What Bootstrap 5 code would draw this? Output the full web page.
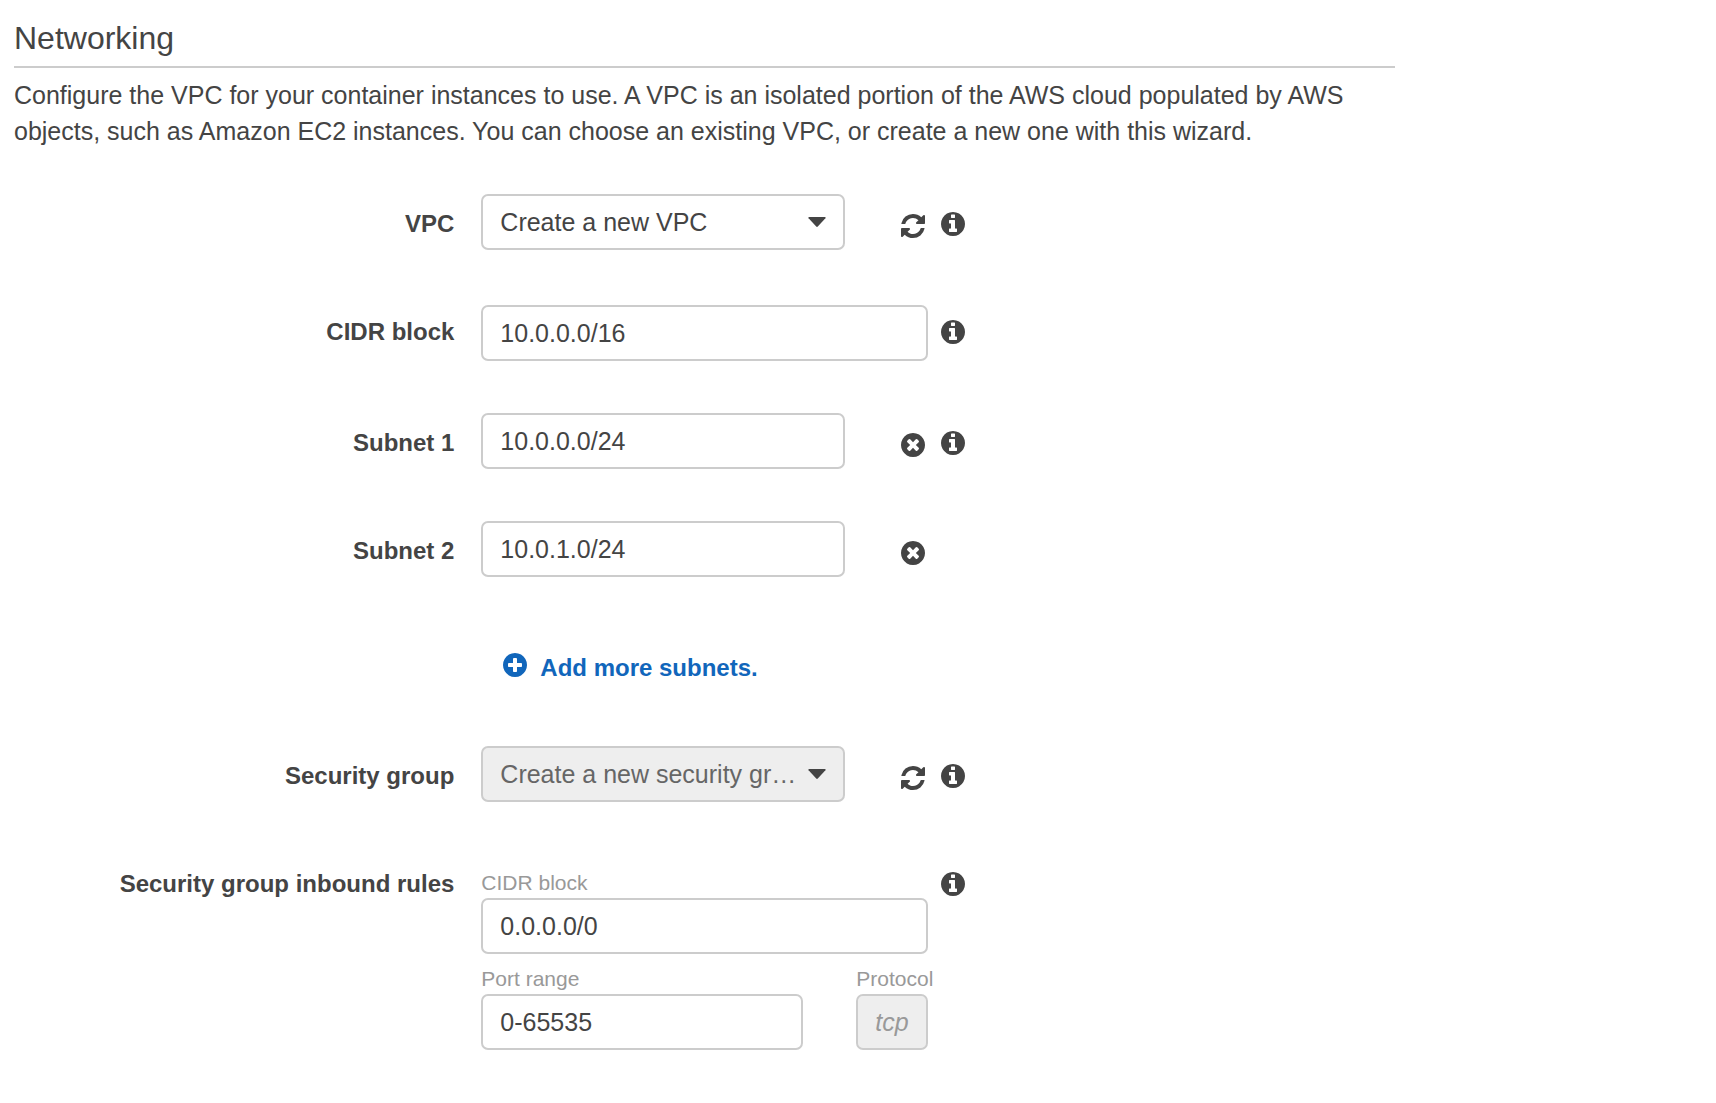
<!DOCTYPE html>
<html lang="en">
<head>
<meta charset="utf-8">
<meta name="viewport" content="width=device-width, initial-scale=1">
<title>Networking</title>
<link href="https://cdn.jsdelivr.net/npm/bootstrap@5.3.0/dist/css/bootstrap.min.css" rel="stylesheet">
<style>
  body { font-family: "Liberation Sans", Arial, sans-serif; font-size: 25px; line-height: 36px; color: #444; background: #fff; }
  .panel { padding: 18px 35px 0 14px; }
  .panel-title { font-size: 32px; line-height: 40px; font-weight: 400; padding-bottom: 8px; border-bottom: 2px solid #ccc; margin-bottom: 9px; }
  .intro { margin-bottom: 45px; }
  .field-row { margin-bottom: 52px; }
  .field-label { padding: 12px 20px 0 0; font-size: 24px; font-weight: 700; text-align: right; }
  .field-body { padding-left: 7px; column-gap: 13px; }
  .slot { flex: 0 1 447px; min-width: 0; }
  .slot-low { padding-top: 3px; }
  .narrow { flex: 0 1 364px; }
  .form-control, .form-select { height: 56px; padding: 8px 17px; border: 2px solid #ccc; border-radius: 7px; font-size: 25px; line-height: 36px; color: #444; background-color: #fff; }
  .form-select { padding-right: 46px; text-overflow: ellipsis; background-size: 18px 10px; background-position: right 17px center;
    background-image: url("data:image/svg+xml,%3Csvg xmlns='http://www.w3.org/2000/svg' viewBox='0 0 18 10'%3E%3Cpath fill='%23444' d='M1 0h16q1 .3.4 1.2L9.8 9.6q-.8.8-1.6 0L.6 1.2Q0 .3 1 0z'/%3E%3C/svg%3E"); }
  .form-select:disabled { color: #666; background-color: #eee; opacity: 1; }
  .form-control:disabled { color: #999; background-color: #eee; font-style: italic; opacity: 1; }
  .icon-btn { display: block; padding: 0; border: 0; background: none; color: #444; line-height: 0; }
  .icon-btn svg, .add-link svg { width: 24px; height: 24px; fill: currentColor; }
  .icon-action { margin: 20px 3px 0 0; }
  .icon-info { margin-top: 18px; }
  .sub-label { display: block; font-size: 21px; line-height: 30px; color: #999; }
  .rules { padding-top: 14px; }
  .ports { padding-top: 10px; }
  .port-field { flex: 0 1 322px; }
  .protocol-field { flex: 0 0 72px; min-width: 0; white-space: nowrap; }
  .add-row { padding: 21px 0 7px; font-size: 24px; }
  .add-link { margin-left: 22px; gap: 13px; font-weight: 700; color: #1166bb; text-decoration: none; }
  .add-link svg { margin-top: 3px; }
</style>
</head>
<body>
<svg class="d-none" aria-hidden="true">
  <symbol id="i-refresh" viewBox="128 128 1536 1536"><path d="M1639 1056q0 5-1 7-64 268-268 434.500t-478 166.500q-146 0-282.500-55t-243.500-157l-129 129q-19 19-45 19t-45-19-19-45v-448q0-26 19-45t45-19h448q26 0 45 19t19 45-19 45l-137 137q71 66 161 102t187 36q134 0 250-65t186-179q11-17 53-117 8-23 30-23h192q13 0 22.500 9.500t9.500 22.500zm25-800v448q0 26-19 45t-45 19h-448q-26 0-45-19t-19-45 19-45l138-138q-148-137-349-137-134 0-250 65t-186 179q-11 17-53 117-8 23-30 23h-199q-13 0-22.500-9.500t-9.500-22.500v-7q65-268 270-434.500t480-166.500q146 0 284 55.500t245 156.500l130-129q19-19 45-19t45 19 19 45z"/></symbol>
  <symbol id="i-info" viewBox="128 128 1536 1536"><path d="M1152 1376v-160q0-14-9-23t-23-9h-96v-512q0-14-9-23t-23-9h-320q-14 0-23 9t-9 23v160q0 14 9 23t23 9h96v320h-96q-14 0-23 9t-9 23v160q0 14 9 23t23 9h448q14 0 23-9t9-23zm-128-896v-160q0-14-9-23t-23-9h-192q-14 0-23 9t-9 23v160q0 14 9 23t23 9h192q14 0 23-9t9-23zm640 416q0 209-103 385.500t-279.500 279.500-385.500 103-385.500-103-279.500-279.500-103-385.500 103-385.500 279.500-279.500 385.500-103 385.500 103 279.500 279.500 103 385.500z"/></symbol>
  <symbol id="i-times" viewBox="128 128 1536 1536"><path d="M1277 1122q0-26-19-45l-181-181 181-181q19-19 19-45 0-27-19-46l-90-90q-19-19-46-19-26 0-45 19l-181 181-181-181q-19-19-45-19-27 0-46 19l-90 90q-19 19-19 46 0 26 19 45l181 181-181 181q-19 19-19 45 0 27 19 46l90 90q19 19 46 19 26 0 45-19l181-181 181 181q19 19 45 19 27 0 46-19l90-90q19-19 19-46zm387-226q0 209-103 385.500t-279.500 279.500-385.500 103-385.500-103-279.500-279.500-103-385.500 103-385.500 279.500-279.500 385.500-103 385.500 103 279.500 279.500 103 385.500z"/></symbol>
  <symbol id="i-plus" viewBox="128 128 1536 1536"><path d="M1344 960v-128q0-26-19-45t-45-19h-256v-256q0-26-19-45t-45-19h-128q-26 0-45 19t-19 45v256h-256q-26 0-45 19t-19 45v128q0 26 19 45t45 19h256v256q0 26 19 45t45 19h128q26 0 45-19t19-45v-256h256q26 0 45-19t19-45zm320-64q0 209-103 385.500t-279.500 279.500-385.500 103-385.500-103-279.500-279.500-103-385.500 103-385.500 279.500-279.500 385.500-103 385.500 103 279.500 279.500 103 385.500z"/></symbol>
</svg>
<main class="col-10 panel">
  <h1 class="panel-title">Networking</h1>
  <p class="intro">Configure the VPC for your container instances to use. A VPC is an isolated portion of the AWS cloud populated by AWS objects, such as Amazon EC2 instances. You can choose an existing VPC, or create a new one with this wizard.</p>
  <form>
    <div class="row g-0 field-row">
      <label class="col-4 field-label" for="vpc">VPC</label>
      <div class="col-8 d-flex align-items-start field-body">
        <div class="slot d-flex align-items-start justify-content-between">
          <div class="narrow"><select class="form-select" id="vpc"><option>Create a new VPC</option></select></div>
          <button type="button" class="icon-btn icon-action" aria-label="Refresh"><svg><use href="#i-refresh"/></svg></button>
        </div>
        <button type="button" class="icon-btn icon-info" aria-label="Info"><svg><use href="#i-info"/></svg></button>
      </div>
    </div>
    <div class="row g-0 field-row">
      <label class="col-4 field-label" for="cidr">CIDR block</label>
      <div class="col-8 d-flex align-items-start field-body">
        <div class="slot slot-low"><input type="text" class="form-control" id="cidr" value="10.0.0.0/16"></div>
        <button type="button" class="icon-btn icon-info" aria-label="Info"><svg><use href="#i-info"/></svg></button>
      </div>
    </div>
    <div class="row g-0 field-row">
      <label class="col-4 field-label" for="subnet1">Subnet 1</label>
      <div class="col-8 d-flex align-items-start field-body">
        <div class="slot d-flex align-items-start justify-content-between">
          <div class="narrow"><input type="text" class="form-control" id="subnet1" value="10.0.0.0/24"></div>
          <button type="button" class="icon-btn icon-action" aria-label="Remove"><svg><use href="#i-times"/></svg></button>
        </div>
        <button type="button" class="icon-btn icon-info" aria-label="Info"><svg><use href="#i-info"/></svg></button>
      </div>
    </div>
    <div class="row g-0 field-row">
      <label class="col-4 field-label" for="subnet2">Subnet 2</label>
      <div class="col-8 d-flex align-items-start field-body">
        <div class="slot d-flex align-items-start justify-content-between">
          <div class="narrow"><input type="text" class="form-control" id="subnet2" value="10.0.1.0/24"></div>
          <button type="button" class="icon-btn icon-action" aria-label="Remove"><svg><use href="#i-times"/></svg></button>
        </div>
      </div>
    </div>
    <div class="row g-0 field-row add-row">
      <div class="col-8 offset-4 field-body">
        <a href="#" class="d-inline-flex align-items-start add-link"><svg><use href="#i-plus"/></svg><span>Add more subnets.</span></a>
      </div>
    </div>
    <div class="row g-0 field-row">
      <label class="col-4 field-label" for="group">Security group</label>
      <div class="col-8 d-flex align-items-start field-body">
        <div class="slot d-flex align-items-start justify-content-between">
          <div class="narrow"><select class="form-select" id="group" disabled><option>Create a new security group</option></select></div>
          <button type="button" class="icon-btn icon-action" aria-label="Refresh"><svg><use href="#i-refresh"/></svg></button>
        </div>
        <button type="button" class="icon-btn icon-info" aria-label="Info"><svg><use href="#i-info"/></svg></button>
      </div>
    </div>
    <div class="row g-0">
      <div class="col-4 field-label" id="rules-label">Security group inbound rules</div>
      <div class="col-8 d-flex align-items-start field-body" role="group" aria-labelledby="rules-label">
        <div class="slot rules">
          <label class="sub-label" for="rule-cidr">CIDR block</label>
          <input type="text" class="form-control" id="rule-cidr" value="0.0.0.0/0">
          <div class="d-flex justify-content-between ports">
            <div class="port-field">
              <label class="sub-label" for="ports">Port range</label>
              <input type="text" class="form-control" id="ports" value="0-65535">
            </div>
            <div class="protocol-field">
              <label class="sub-label" for="protocol">Protocol</label>
              <input type="text" class="form-control" id="protocol" value="tcp" disabled>
            </div>
          </div>
        </div>
        <button type="button" class="icon-btn icon-info" aria-label="Info"><svg><use href="#i-info"/></svg></button>
      </div>
    </div>
  </form>
</main>
<script src="https://cdn.jsdelivr.net/npm/bootstrap@5.3.0/dist/js/bootstrap.bundle.min.js"></script>
</body>
</html>
